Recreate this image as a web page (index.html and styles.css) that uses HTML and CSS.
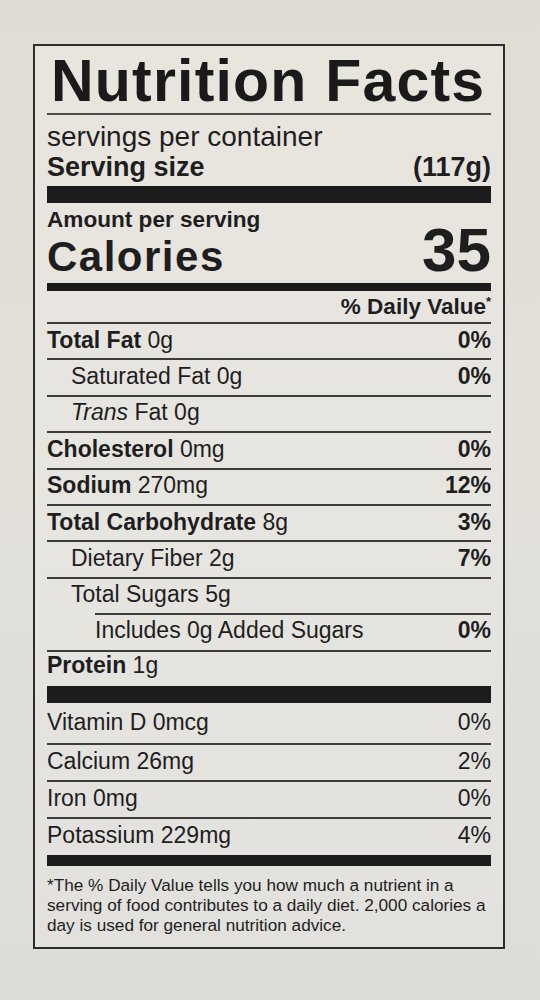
FILE: index.html
```html
<!DOCTYPE html>
<html lang="en">
<head>
    <meta charset="UTF-8">
    <meta name="viewport" content="width=device-width, initial-scale=1.0">
    <title>Nutrition Facts</title>
    <link rel="stylesheet" href="styles.css">
</head>
<body>
    <!-- Nutrition Label -->
    <div class="label">
        <h1 class="title">Nutrition Facts</h1>
        <div class="rule"></div>

        <p class="servings">servings per container</p>
        <div class="serving-size">
            <span>Serving size</span>
            <span>(117g)</span>
        </div>
        <div class="bar bar-thick"></div>

        <p class="amount">Amount per serving</p>
        <div class="calories">
            <span class="cal-label">Calories</span>
            <span class="cal-value">35</span>
        </div>
        <div class="bar bar-medium"></div>

        <div class="dv-head">% Daily Value<span class="ast">*</span></div>

        <!-- Nutrients -->
        <div class="row"><span><b>Total Fat</b> 0g</span><b>0%</b></div>
        <div class="row indent"><span>Saturated Fat 0g</span><b>0%</b></div>
        <div class="row indent"><span><i>Trans</i> Fat 0g</span></div>
        <div class="row"><span><b>Cholesterol</b> 0mg</span><b>0%</b></div>
        <div class="row"><span><b>Sodium</b> 270mg</span><b>12%</b></div>
        <div class="row"><span><b>Total Carbohydrate</b> 8g</span><b>3%</b></div>
        <div class="row indent"><span>Dietary Fiber 2g</span><b>7%</b></div>
        <div class="row indent"><span>Total Sugars 5g</span></div>
        <div class="row indent-2"><span>Includes 0g Added Sugars</span><b>0%</b></div>
        <div class="row protein"><span><b>Protein</b> 1g</span></div>
        <div class="bar bar-protein"></div>

        <!-- Vitamins & Minerals -->
        <div class="row vit first"><span>Vitamin D 0mcg</span><span>0%</span></div>
        <div class="row vit"><span>Calcium 26mg</span><span>2%</span></div>
        <div class="row vit"><span>Iron 0mg</span><span>0%</span></div>
        <div class="row vit"><span>Potassium 229mg</span><span>4%</span></div>
        <div class="bar bar-bottom"></div>

        <p class="footnote">
            *The % Daily Value tells you how much a nutrient in a<br>
            serving of food contributes to a daily diet. 2,000 calories a<br>
            day is used for general nutrition advice.
        </p>
    </div>
</body>
</html>
```

FILE: styles.css
```css
* {
    margin: 0;
    padding: 0;
    box-sizing: border-box;
}

body {
    min-height: 1000px;
    background: linear-gradient(180deg, #e0dbd3 0%, #e3e0da 45%, #dcdcd8 100%);
    font-family: 'Liberation Sans', Arial, sans-serif;
    color: #1e1e1e;
    overflow: hidden;
}

/* Label Box */
.label {
    width: 472px;
    margin: 44px 0 0 33px;
    padding: 6px 12px 12px 12px;
    border: 2px solid #2c2c2c;
    background: linear-gradient(180deg, #e8e4de 0%, #e7e5e0 50%, #e2e1dd 100%);
}

.title {
    font-size: 59px;
    line-height: 59px;
    font-weight: bold;
    letter-spacing: 1.2px;
    padding-left: 4px;
    color: #1a1a1a;
}

.rule {
    height: 2px;
    margin-top: 2px;
    background: #4a4a4a;
}

.servings {
    font-size: 28px;
    line-height: 30px;
    margin-top: 7px;
}

.serving-size {
    display: flex;
    justify-content: space-between;
    font-size: 27px;
    line-height: 30px;
    font-weight: bold;
}

/* Black Bars */
.bar {
    background: #1c1c1c;
}

.bar-thick {
    height: 17px;
    margin-top: 4px;
}

.bar-medium {
    height: 8px;
    margin-top: 4px;
}

.bar-protein {
    height: 17px;
}

.bar-bottom {
    height: 11px;
    margin-top: 1px;
}

/* Calories Section */
.amount {
    font-size: 22.6px;
    line-height: 22px;
    font-weight: bold;
    margin-top: 6px;
}

.calories {
    display: flex;
    justify-content: space-between;
    align-items: baseline;
    line-height: 44px;
    margin-top: -3px;
    font-weight: bold;
}

.cal-label {
    font-size: 42px;
    letter-spacing: 1.5px;
}

.cal-value {
    font-size: 62px;
}

.dv-head {
    font-size: 22.5px;
    line-height: 31px;
    font-weight: bold;
    text-align: right;
}

.ast {
    font-size: 13px;
    vertical-align: top;
    line-height: 22px;
}

/* Nutrient Rows */
.row {
    display: flex;
    justify-content: space-between;
    align-items: center;
    height: 36.4px;
    padding-bottom: 3px;
    border-top: 2px solid #3c3c3c;
    font-size: 23px;
    line-height: 26px;
}

.row.indent {
    padding-left: 24px;
}

.row.indent-2 {
    padding-left: 48px;
    border-top: none;
    position: relative;
}

.row.indent-2::before {
    content: '';
    position: absolute;
    top: 0;
    left: 48px;
    right: 0;
    height: 2px;
    background: #3c3c3c;
}

.row.protein {
    padding-bottom: 8px;
}

.row.vit {
    height: 37px;
    padding-bottom: 2px;
}

.row.vit.first {
    height: 40px;
    border-top: none;
}

.footnote {
    font-size: 17.2px;
    line-height: 20px;
    padding-top: 9px;
    white-space: nowrap;
}
```
